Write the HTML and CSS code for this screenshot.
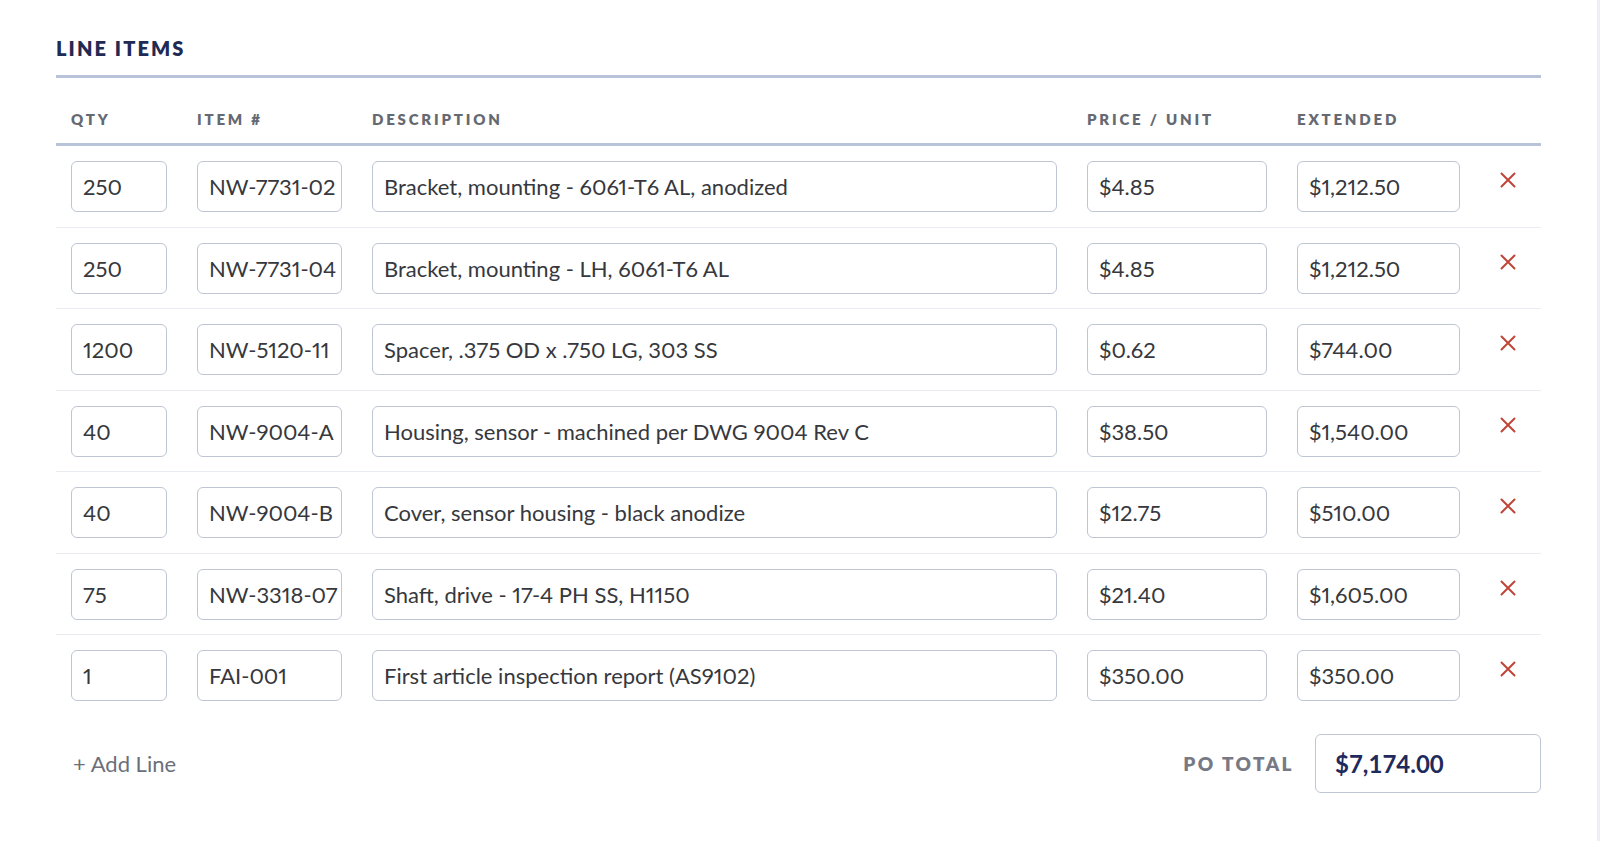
FILE: index.html
```html
<!DOCTYPE html>
<html lang="en">
<head>
<meta charset="utf-8">
<title>Purchase Order – Line Items</title>
<link rel="stylesheet" href="styles.css">
</head>
<body>
<div class="page">
  <section class="line-items">
    <h2 class="section-title">LINE ITEMS</h2>

    <div class="grid head">
      <div class="th">QTY</div>
      <div class="th">ITEM #</div>
      <div class="th">DESCRIPTION</div>
      <div class="th">PRICE / UNIT</div>
      <div class="th">EXTENDED</div>
      <div class="th"></div>
    </div>

    <div class="lines">
      <div class="grid row">
        <input class="field" value="250" readonly>
        <input class="field" value="NW-7731-02" readonly>
        <input class="field" value="Bracket, mounting - 6061-T6 AL, anodized" readonly>
        <input class="field" value="$4.85" readonly>
        <input class="field" value="$1,212.50" readonly>
        <button class="remove" type="button" aria-label="Remove line"><svg viewBox="0 0 16 16"><path d="M1.5 1.5 14.5 14.5M14.5 1.5 1.5 14.5"/></svg></button>
      </div>

      <div class="grid row">
        <input class="field" value="250" readonly>
        <input class="field" value="NW-7731-04" readonly>
        <input class="field" value="Bracket, mounting - LH, 6061-T6 AL" readonly>
        <input class="field" value="$4.85" readonly>
        <input class="field" value="$1,212.50" readonly>
        <button class="remove" type="button" aria-label="Remove line"><svg viewBox="0 0 16 16"><path d="M1.5 1.5 14.5 14.5M14.5 1.5 1.5 14.5"/></svg></button>
      </div>

      <div class="grid row">
        <input class="field" value="1200" readonly>
        <input class="field" value="NW-5120-11" readonly>
        <input class="field" value="Spacer, .375 OD x .750 LG, 303 SS" readonly>
        <input class="field" value="$0.62" readonly>
        <input class="field" value="$744.00" readonly>
        <button class="remove" type="button" aria-label="Remove line"><svg viewBox="0 0 16 16"><path d="M1.5 1.5 14.5 14.5M14.5 1.5 1.5 14.5"/></svg></button>
      </div>

      <div class="grid row">
        <input class="field" value="40" readonly>
        <input class="field" value="NW-9004-A" readonly>
        <input class="field" value="Housing, sensor - machined per DWG 9004 Rev C" readonly>
        <input class="field" value="$38.50" readonly>
        <input class="field" value="$1,540.00" readonly>
        <button class="remove" type="button" aria-label="Remove line"><svg viewBox="0 0 16 16"><path d="M1.5 1.5 14.5 14.5M14.5 1.5 1.5 14.5"/></svg></button>
      </div>

      <div class="grid row">
        <input class="field" value="40" readonly>
        <input class="field" value="NW-9004-B" readonly>
        <input class="field" value="Cover, sensor housing - black anodize" readonly>
        <input class="field" value="$12.75" readonly>
        <input class="field" value="$510.00" readonly>
        <button class="remove" type="button" aria-label="Remove line"><svg viewBox="0 0 16 16"><path d="M1.5 1.5 14.5 14.5M14.5 1.5 1.5 14.5"/></svg></button>
      </div>

      <div class="grid row">
        <input class="field" value="75" readonly>
        <input class="field" value="NW-3318-07" readonly>
        <input class="field" value="Shaft, drive - 17-4 PH SS, H1150" readonly>
        <input class="field" value="$21.40" readonly>
        <input class="field" value="$1,605.00" readonly>
        <button class="remove" type="button" aria-label="Remove line"><svg viewBox="0 0 16 16"><path d="M1.5 1.5 14.5 14.5M14.5 1.5 1.5 14.5"/></svg></button>
      </div>

      <div class="grid row">
        <input class="field" value="1" readonly>
        <input class="field" value="FAI-001" readonly>
        <input class="field" value="First article inspection report (AS9102)" readonly>
        <input class="field" value="$350.00" readonly>
        <input class="field" value="$350.00" readonly>
        <button class="remove" type="button" aria-label="Remove line"><svg viewBox="0 0 16 16"><path d="M1.5 1.5 14.5 14.5M14.5 1.5 1.5 14.5"/></svg></button>
      </div>
    </div>

    <div class="footer">
      <button class="add-line" type="button">+ Add Line</button>
      <div class="total">
        <span class="total-label">PO TOTAL</span>
        <div class="total-box">$7,174.00</div>
      </div>
    </div>
  </section>
</div>
</body>
</html>
```

FILE: styles.css
```css
* {
  box-sizing: border-box;
}

html, body {
  margin: 0;
  padding: 0;
}

body {
  background: #eeeef4;
  font-family: "Lato", "Open Sans", sans-serif;
  color: #36383d;
}

.page {
  background: #ffffff;
  margin-right: 3px;
  min-height: 100vh;
  padding: 36px 56px 40px;
}

/* section heading with its heavy rule */
.section-title {
  margin: 0;
  font-size: 20px;
  line-height: 24px;
  font-weight: 800;
  letter-spacing: 2.1px;
  color: #1f2a55;
  padding-bottom: 15px;
  border-bottom: 3px solid #b8c2d8;
}

/* shared column template for the header and every line */
.grid {
  display: grid;
  grid-template-columns: 96px 145px 685px 180px 163px 36px;
  column-gap: 30px;
  padding-left: 15px;
}

.head {
  padding-top: 32px;
  padding-bottom: 15px;
  border-bottom: 3px solid #b8c2d8;
}

.th {
  font-size: 15px;
  line-height: 18px;
  font-weight: 800;
  letter-spacing: 2.8px;
  color: #656972;
}

.row {
  padding-top: 15px;
  padding-bottom: 14.5px;
  border-bottom: 1px solid #e9ecf1;
  align-items: start;
}

.row:last-child {
  border-bottom: none;
}

.field {
  display: block;
  width: 100%;
  height: 51px;
  margin: 0;
  padding: 0 2px 0 11px;
  border: 1px solid #bec5d3;
  border-radius: 6px;
  background: #fff;
  font-family: "Lato", "Open Sans", sans-serif;
  font-size: 22px;
  font-variant-numeric: proportional-nums;
  letter-spacing: 0;
  color: #36383d;
  outline: none;
}

.remove {
  justify-self: center;
  width: 16px;
  height: 16px;
  margin-top: 11px;
  padding: 0;
  border: 0;
  background: none;
  cursor: pointer;
}

.remove svg {
  display: block;
  width: 16px;
  height: 16px;
  fill: none;
  stroke: #c04538;
  stroke-width: 2;
  stroke-linecap: round;
}

.footer {
  display: flex;
  align-items: center;
  justify-content: space-between;
  padding-top: 18.5px;
}

.add-line {
  margin-left: 17px;
  padding: 0;
  border: 0;
  background: none;
  font-family: "Lato", "Open Sans", sans-serif;
  font-size: 22px;
  color: #6b6f7b;
  cursor: pointer;
}

.total {
  display: flex;
  align-items: center;
  gap: 21px;
}

.total-label {
  font-size: 19px;
  font-weight: 800;
  letter-spacing: 2.4px;
  color: #777a85;
}

.total-box {
  width: 226px;
  height: 59px;
  display: flex;
  align-items: center;
  padding: 0 19px;
  border: 1px solid #bec5d3;
  border-radius: 6px;
  font-size: 24px;
  font-weight: 700;
  color: #1f2a5c;
}
```
